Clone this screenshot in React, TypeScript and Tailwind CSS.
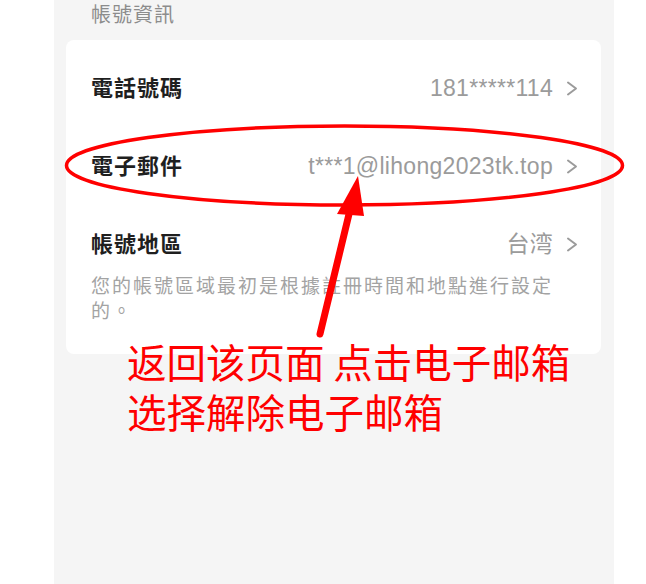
import React from 'react';

const sans = { fontFamily: '"Liberation Sans", "Noto Sans CJK TC", sans-serif' };

interface InfoRow {
  label: string;
  value: string;
}

const rows: InfoRow[] = [
  { label: '電話號碼', value: '181*****114' },
  { label: '電子郵件', value: 't***1@lihong2023tk.top' },
  { label: '帳號地區', value: '台湾' },
];

const Chevron = () => (
  <svg width="12" height="15" viewBox="0 0 12 15" fill="none" className="shrink-0">
    <polyline points="2,1.5 10,7.5 2,13.5" stroke="#9b9b9b" strokeWidth="2" strokeLinecap="round" strokeLinejoin="round" />
  </svg>
);

export default function App() {
  return (
    <div className="relative h-[584px] w-[646px] overflow-hidden bg-white" style={sans}>
      {/* Settings panel */}
      <div className="ml-[54px] h-full w-[560px] bg-[#f5f5f5]">
        <div className="h-[40px] pl-[37px] pt-[3px] text-[20px] leading-[24px] tracking-[1px] text-[#8c8c8c]">
          帳號資訊
        </div>

        <div className="ml-[12px] w-[535px] rounded-[8px] bg-white pb-[30px] pl-[25px] pr-[23px] pt-[9px]">
          {rows.map((row) => (
            <div key={row.label} className="flex h-[78px] items-center justify-between">
              <span className="text-[22px] font-semibold tracking-[1px] text-[#1f1f1f]">{row.label}</span>
              <div className="flex items-center gap-[13px]">
                <span className="text-[23px] tracking-[0.3px] text-[#9b9b9b]">{row.value}</span>
                <Chevron />
              </div>
            </div>
          ))}
          <p className="-mt-[9px] w-[470px] text-[19px] leading-[25px] tracking-[2px] text-[#a3a3a3]">
            您的帳號區域最初是根據註冊時間和地點進行設定的。
          </p>
        </div>
      </div>

      {/* Annotation: ellipse + arrow */}
      <svg className="pointer-events-none absolute left-0 top-0" width="646" height="584" viewBox="0 0 646 584">
        <ellipse cx="344.5" cy="165.5" rx="278" ry="39.5" fill="none" stroke="#ff0000" strokeWidth="3.5" />
        <line x1="320" y1="334" x2="350" y2="210" stroke="#ff0000" strokeWidth="7" strokeLinecap="round" />
        <polygon points="358,176 337,214 364,216" fill="#ff0000" />
      </svg>

      <div
        className="absolute left-[127px] top-[336px] text-[39.5px] leading-[50px] text-[#ff0000]"
        style={{ fontFamily: '"Noto Sans CJK SC", sans-serif' }}
      >
        <p>返回该页面 点击电子邮箱</p>
        <p>选择解除电子邮箱</p>
      </div>
    </div>
  );
}
